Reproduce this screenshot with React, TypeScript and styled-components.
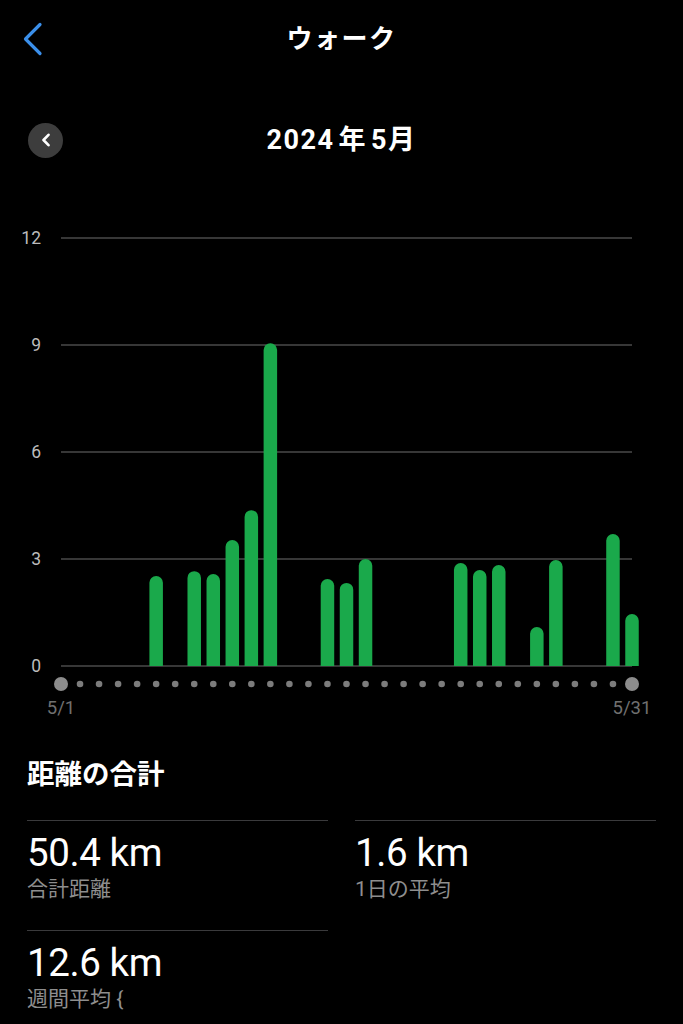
import styled, { createGlobalStyle } from "styled-components";

const GlobalStyle = createGlobalStyle`
  html, body {
    margin: 0;
    padding: 0;
    background: #000;
  }
  body {
    font-family: Roboto, "Noto Sans CJK JP", sans-serif;
    color: #fff;
  }
`;

const Page = styled.div`
  width: 683px;
  min-height: 1024px;
  background: #000;
  overflow: hidden;
`;

const NavBar = styled.header`
  height: 78px;
  display: grid;
  grid-template-columns: 80px 1fr 80px;
  align-items: center;
`;

const BackButton = styled.button`
  background: none;
  border: 0;
  padding: 0 0 0 21px;
  display: flex;
  align-items: center;
  height: 40px;
  cursor: pointer;
`;

const NavTitle = styled.h1`
  margin: 0;
  text-align: center;
  font-size: 26px;
  font-weight: 700;
  line-height: 32px;
  letter-spacing: 1.5px;
`;

const MonthRow = styled.div`
  margin-top: 40px;
  height: 44px;
  display: grid;
  grid-template-columns: 80px 1fr 80px;
  align-items: center;
`;

const RoundButton = styled.button`
  margin-left: 28px;
  width: 35px;
  height: 35px;
  border-radius: 50%;
  border: 0;
  padding: 0;
  background: #3d3d3d;
  display: flex;
  align-items: center;
  justify-content: center;
  cursor: pointer;
`;

const MonthTitle = styled.h2`
  margin: 0;
  text-align: center;
  font-size: 27px;
  font-weight: 700;
  line-height: 32px;
  letter-spacing: 1.5px;
`;

const Unit = styled.span`
  margin: 0 4px;
`;

const ChartSvg = styled.svg`
  display: block;
  margin-top: 38px;
`;

const Section = styled.section`
  padding: 0 27px;
`;

const SectionTitle = styled.h3`
  margin: 39px 0 0;
  font-size: 27.5px;
  font-weight: 700;
  line-height: 32px;
`;

const StatGrid = styled.div`
  margin-top: 29px;
  display: grid;
  grid-template-columns: 1fr 1fr;
  column-gap: 27px;
`;

const StatCell = styled.div`
  border-top: 1.5px solid #3a3a3c;
  padding: 11px 0 28px;
`;

const StatValue = styled.div`
  font-size: 38.5px;
  line-height: 42px;
  font-weight: 400;
  letter-spacing: -0.4px;
`;

const StatLabel = styled.div`
  margin-top: 2px;
  font-size: 21px;
  line-height: 26px;
  color: #8e8e8e;
`;

// distance per day (km), taken from the chart
const days: Record<number, number> = {
  6: 2.52, 8: 2.66, 9: 2.58, 10: 3.53, 11: 4.37, 12: 9.05,
  15: 2.44, 16: 2.33, 17: 3.0,
  22: 2.89, 23: 2.69, 24: 2.83,
  26: 1.09, 27: 2.97,
  30: 3.7, 31: 1.46,
};

const X0 = 61;
const X1 = 632;
const BASE = 466;
const UNIT = 107 / 3;
const BAR_W = 13.5;

const dayX = (d: number) => X0 + ((d - 1) * (X1 - X0)) / 30;

function barPath(cx: number, v: number) {
  const top = BASE - v * UNIT;
  const r = BAR_W / 2;
  const l = cx - r;
  const rt = cx + r;
  return `M${l} ${BASE} L${l} ${top + r} A${r} ${r} 0 0 1 ${rt} ${top + r} L${rt} ${BASE} Z`;
}

function Chart() {
  const ticks = [12, 9, 6, 3, 0];
  return (
    <ChartSvg width={683} height={520} viewBox="0 0 683 520">
      {ticks.map((t) => {
        const y = BASE - t * UNIT;
        return (
          <g key={t}>
            <line x1={X0} x2={X1} y1={y} y2={y} stroke="#4a4a4a" strokeWidth={1.5} />
            <text
              x={41}
              y={y + 6}
              textAnchor="end"
              fill="#bcbcbc"
              fontSize={17.5}
              fontFamily="Roboto, sans-serif"
            >
              {t}
            </text>
          </g>
        );
      })}
      {Object.entries(days).map(([d, v]) => (
        <path key={d} d={barPath(dayX(Number(d)), v)} fill="#1aa94b" />
      ))}
      {Array.from({ length: 31 }, (_, i) => i + 1).map((d) => (
        <circle
          key={d}
          cx={dayX(d)}
          cy={484}
          r={d === 1 || d === 31 ? 7 : 3.3}
          fill={d === 1 || d === 31 ? "#8c8c8c" : "#7c7c7c"}
        />
      ))}
      <text x={X0} y={514} textAnchor="middle" fill="#707070" fontSize={18.5} fontFamily="Roboto, sans-serif">
        5/1
      </text>
      <text x={X1} y={514} textAnchor="middle" fill="#707070" fontSize={18.5} fontFamily="Roboto, sans-serif">
        5/31
      </text>
    </ChartSvg>
  );
}

export default function App() {
  return (
    <Page>
      <GlobalStyle />
      <NavBar>
        <BackButton aria-label="戻る">
          <svg width="22" height="34" viewBox="0 0 22 34">
            <path d="M19 2.5 L4.5 17 L19 31.5" fill="none" stroke="#3b8fea" strokeWidth={3.2} strokeLinecap="round" strokeLinejoin="round" />
          </svg>
        </BackButton>
        <NavTitle>ウォーク</NavTitle>
        <span />
      </NavBar>

      <MonthRow>
        <RoundButton aria-label="前の月">
          <svg width="12" height="14" viewBox="0 0 12 14">
            <path d="M8.5 1.8 L3.5 7 L8.5 12.2" fill="none" stroke="#fff" strokeWidth={2.6} strokeLinecap="round" strokeLinejoin="round" />
          </svg>
        </RoundButton>
        <MonthTitle>
          2024<Unit>年</Unit>5月
        </MonthTitle>
        <span />
      </MonthRow>

      <Chart />

      <Section>
        <SectionTitle>距離の合計</SectionTitle>
        <StatGrid>
          <StatCell>
            <StatValue>50.4 km</StatValue>
            <StatLabel>合計距離</StatLabel>
          </StatCell>
          <StatCell>
            <StatValue>1.6 km</StatValue>
            <StatLabel>1日の平均</StatLabel>
          </StatCell>
          <StatCell>
            <StatValue>12.6 km</StatValue>
            <StatLabel>週間平均 {"{"}</StatLabel>
          </StatCell>
        </StatGrid>
      </Section>
    </Page>
  );
}
